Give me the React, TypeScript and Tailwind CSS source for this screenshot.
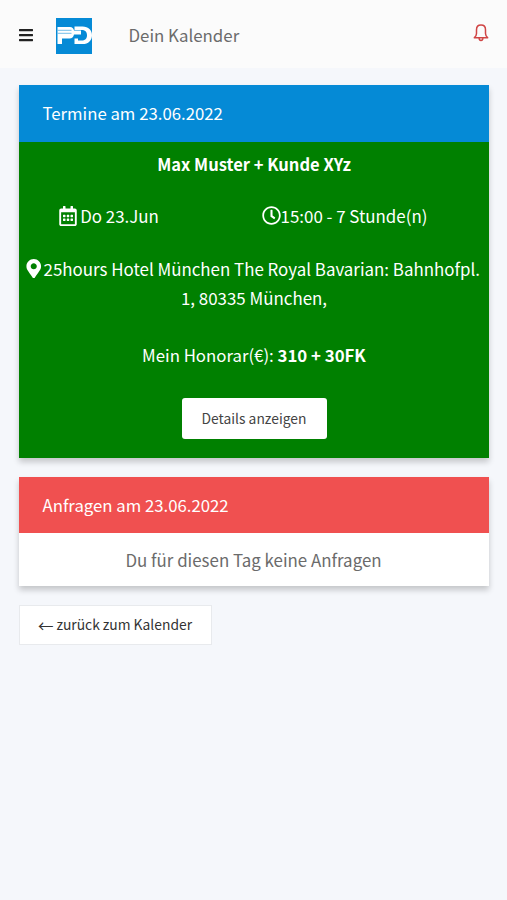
import { FaBars, FaMapMarkerAlt, FaRegCalendarAlt, FaRegClock } from "react-icons/fa";

function Logo() {
  return (
    <svg viewBox="0 0 36 36" className="h-9 w-9">
      <rect width="36" height="36" fill="#058ad6" />
      <path d="M1.500 9h12.500c2.300 0 3.500 1.400 4 3.500h7v4h-7c-.6 2.700-2 4-4.500 4H6v5.500H1.500z" fill="#fff" />
      <path d="M1.500 12.300h14M1.500 15.300h14" stroke="#64b7e6" strokeWidth="0.900" />
      <path d="M18.500 8.500h8c6 0 9.500 3.500 9.500 8.700s-3.500 8.800-9.500 8.800h-8v-5.500h3.500v2h3.500c3.500 0 5.500-2 5.500-5.300s-2-5.200-5.500-5.200h-7z" fill="#fff" />
    </svg>
  );
}

function Bell() {
  return (
    <svg viewBox="0 0 16 18" className="h-[18px] w-4" fill="none" stroke="#d04545" strokeWidth="1.500" strokeLinejoin="round">
      <path d="M8 1C5.100 1 3.500 3 3.500 5.700V9.500c0 1.800-.8 3-2.200 4.300h13.400c-1.400-1.300-2.200-2.500-2.200-4.300V5.700C12.500 3 10.900 1 8 1z" />
      <path d="M6 14.200c.2 1.500.9 2.200 2 2.200s1.800-.7 2-2.200" />
    </svg>
  );
}

export default function App() {
  return (
    <div className="min-h-screen bg-[#f5f7fb] font-['Noto_Sans_CJK_SC','Noto_Sans',sans-serif] text-[16.900px] leading-[29px] text-[#6b6b6b]">
      <header className="flex h-[68px] items-center bg-[#fbfbfb] pr-[18px] pb-[2px] pl-[18px]">
        <button className="mt-[3px] text-[16px] text-[#222]">
          <FaBars />
        </button>
        <div className="ml-[22px] mt-[5px]">
          <Logo />
        </div>
        <h1 className="ml-[36.500px] mt-[2px] text-[16.850px]">Dein Kalender</h1>
        <button className="ml-auto">
          <Bell />
        </button>
      </header>

      <main className="px-[18.500px] pt-[17px]">
        <section className="shadow-[0_4px_6px_rgba(0,0,0,0.2)]">
          <h2 className="flex h-[57px] items-center bg-[#058ad6] px-6 text-[16.750px] text-white">
            Termine am 23.06.2022
          </h2>
          <div className="h-[316px] bg-[#008000] pt-[8px] pl-[1px] text-center text-white">
            <p className="text-[16.550px] font-bold">Max Muster + Kunde XYz</p>
            <div className="mt-[22px] flex">
              <div className="flex w-[178px] items-center justify-center">
                <FaRegCalendarAlt className="mr-[2px] text-[20px]" />
                Do 23.Jun
              </div>
              <div className="flex flex-1 items-center justify-center pl-[3px]">
                <FaRegClock className="text-[19px]" />
                15:00 - 7 Stunde(n)
              </div>
            </div>
            <p className="mt-6 whitespace-nowrap">
              <FaMapMarkerAlt className="-ml-[4px] inline align-[-2px] text-[19.500px]" />
              25hours Hotel München The Royal Bavarian: Bahnhofpl.
              <br />
              1, 80335 München,
            </p>
            <p className="mt-[29px] text-[16.800px]">
              Mein Honorar(€): <b>310 + 30FK</b>
            </p>
            <button className="mt-[28px] h-[41px] w-[145px] rounded-[3px] bg-white text-[13.850px] text-[#444]">
              Details anzeigen
            </button>
          </div>
        </section>

        <section className="mt-[19px] shadow-[0_4px_6px_rgba(0,0,0,0.2)]">
          <h2 className="flex h-[56px] items-center bg-[#f05050] px-6 text-[16.750px] text-white">
            Anfragen am 23.06.2022
          </h2>
          <p className="flex h-[53px] items-center justify-center bg-white">Du für diesen Tag keine Anfragen</p>
        </section>

        <button className="mt-[19px] flex h-[40px] w-[193px] items-center justify-center border border-[#e8eaed] bg-white pb-[1px] text-[13.850px] text-[#333]">
          <span className="mr-[3px] mt-[1px] text-[15.500px]">←</span>
          zurück zum Kalender
        </button>
      </main>
    </div>
  );
}
